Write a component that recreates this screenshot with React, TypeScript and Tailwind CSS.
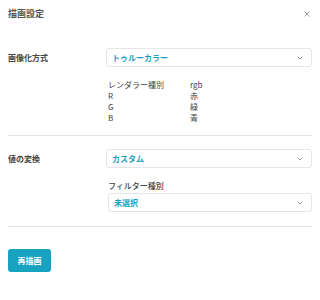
import React from "react";

const font = { fontFamily: '"Noto Sans CJK JP", "Noto Sans", sans-serif' };

function Chevron() {
  return (
    <svg width="6" height="4" viewBox="0 0 6 4" className="mr-[8px]">
      <path d="M0.8 0.8 L3 3 L5.2 0.8" fill="none" stroke="#9a9a9a" strokeWidth="1" />
    </svg>
  );
}

function Select({ value }: { value: string }) {
  return (
    <div className="flex h-[19px] items-center justify-between rounded-[3px] border border-[#e6e6e6] bg-white pl-[5px]">
      <span className="text-[8px] font-bold leading-none text-[#17a2c4]">{value}</span>
      <Chevron />
    </div>
  );
}

export default function App() {
  return (
    <div className="h-[300px] w-[320px] bg-white px-2 text-[#444]" style={font}>
      <div className="flex h-[26px] items-center justify-between pt-[1px]">
        <span className="text-[9px] font-bold text-[#555]">描画設定</span>
        <svg width="6" height="6" viewBox="0 0 6 6" className="mr-[2px]">
          <path d="M0.5 0.5 L5.5 5.5 M5.5 0.5 L0.5 5.5" stroke="#9a9a9a" strokeWidth="0.9" />
        </svg>
      </div>

      <div className="mt-[22px] flex pb-[12px]">
        <div className="w-[98px] text-[8px] font-bold leading-[19px]">画像化方式</div>
        <div className="flex-1">
          <Select value="トゥルーカラー" />
          <div className="mt-[12px] grid grid-cols-[82px_1fr] pl-[2px] text-[8px] leading-[11px] text-[#444]">
            <span>レンダラー種別</span>
            <span>rgb</span>
            <span>R</span>
            <span>赤</span>
            <span>G</span>
            <span>緑</span>
            <span>B</span>
            <span>青</span>
          </div>
        </div>
      </div>

      <div className="border-t border-[#e3e3e3]" />

      <div className="mt-[13px] flex">
        <div className="w-[98px] text-[8px] font-bold leading-[19px]">値の変換</div>
        <div className="flex-1">
          <Select value="カスタム" />
          <div className="pl-[2px]">
            <div className="mt-[12px] text-[8px] font-medium leading-[11px]">フィルター種別</div>
            <div className="mt-[2px]">
              <Select value="未選択" />
            </div>
          </div>
        </div>
      </div>

      <div className="mt-[14px] border-t border-[#e3e3e3]" />

      <button className="mt-[22px] flex h-[23px] w-[43px] items-center justify-center rounded-[3px] bg-[#17a2bf] text-[8px] font-bold text-white">
        再描画
      </button>
    </div>
  );
}
